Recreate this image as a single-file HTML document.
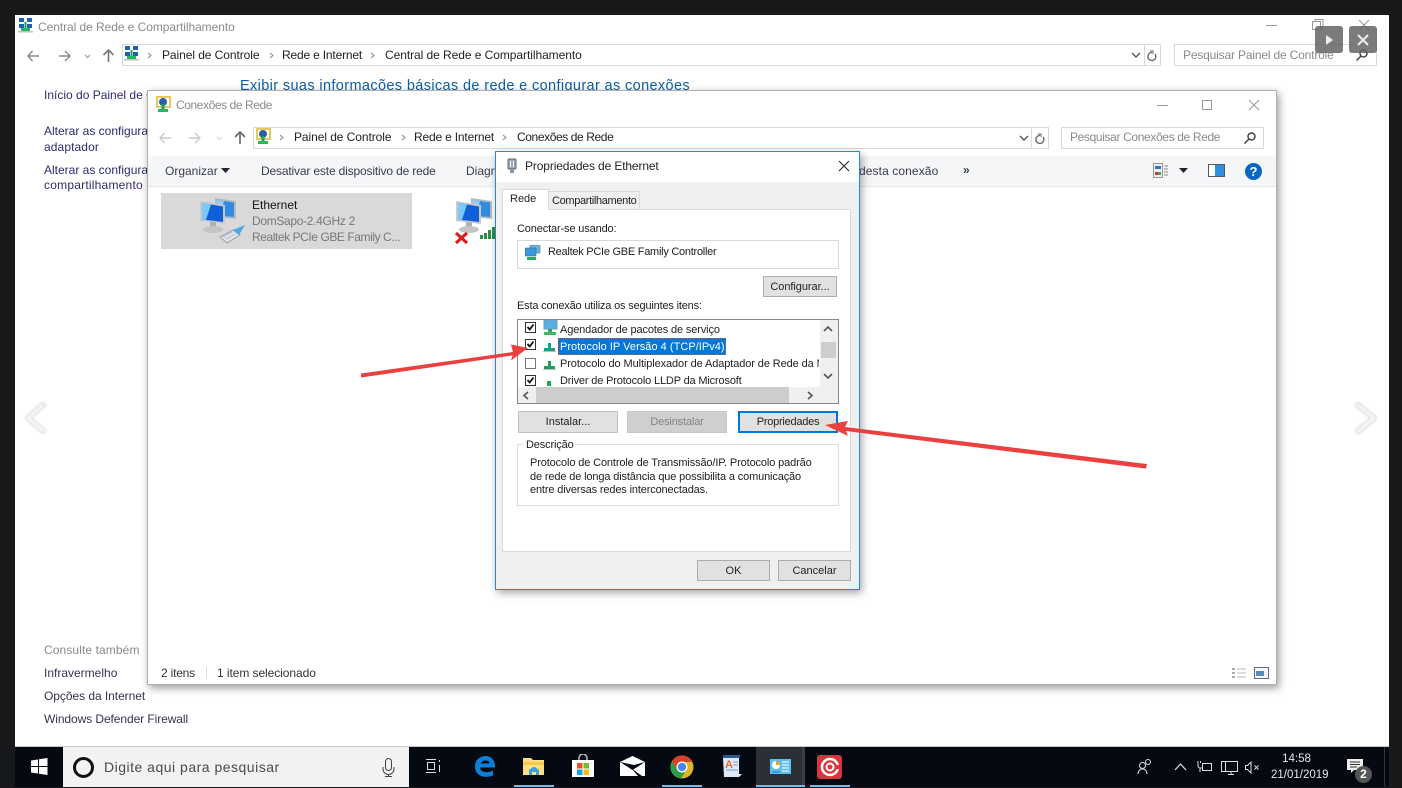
<!DOCTYPE html>
<html><head><meta charset="utf-8"><style>
*{box-sizing:border-box}
html,body{margin:0;padding:0;width:1402px;height:788px;overflow:hidden;background:#18191b}
body{position:relative;font-family:"Liberation Sans",sans-serif;font-size:12px;color:#222}
div,svg{position:absolute}
#w{left:0;top:0;width:1402px;height:788px;filter:blur(.35px)}
.t{white-space:nowrap;line-height:16px;height:16px}
.d{font-size:11px}
.l{color:#2b2b70}
.g{color:#8a8a8a}
.b{background:#e1e1e1;border:1px solid #adadad;text-align:center;line-height:20px;color:#222;font-size:11px}
.box{background:#fff;border:1px solid #d9d9d9}
</style></head><body>
<svg width="0" height="0" style="left:0;top:0">
<defs>
<g id="net"><rect x="1" y="0" width="5" height="4" fill="#2060b0"/><rect x="9" y="0" width="5" height="4" fill="#2060b0"/><rect x="1" y="6" width="5" height="4" fill="#2060b0"/><rect x="9" y="6" width="5" height="4" fill="#2060b0"/><rect x="6.5" y="4" width="2" height="9" fill="#20a050"/><rect x="3" y="10" width="9" height="3" fill="#20b860"/><rect x="0" y="13" width="15" height="1.5" fill="#c0c0c0"/></g>
<g id="conn"><rect x="1" y="0" width="15" height="12" fill="#e8c860"/><rect x="3" y="2" width="11" height="8" fill="#fff"/><circle cx="8" cy="6" r="4" fill="#2a5fa8"/><rect x="6.5" y="8" width="3" height="6" fill="#20a050"/><rect x="3" y="13" width="10" height="3" fill="#20b860"/></g>
<g id="mon"><path d="M16 1l21 3v18l-21-2z" fill="#b4bac2"/><path d="M18 3l17 2.500v14.500l-17-1.500z" fill="#2f8ce0"/><path d="M18 3l7 1-4 14.800-3-.3z" fill="#8ed0f8"/><path d="M1 4l25 4v19L1 24z" fill="#c6cad0"/><path d="M3 6l21 3.500V25L3 22.500z" fill="#0f5fd8"/><path d="M3 6l9 1.500-5 15.400-4-.4z" fill="#7cc8f8"/><path d="M11 25h6v6h-6z" fill="#b0b0b0"/><ellipse cx="14" cy="32.500" rx="10" ry="3.500" fill="#c4c4c4"/></g>
<g id="nodeg"><path d="M5 0h3v5H5z" fill="#20a060"/><path d="M1 5h11v3H1z" fill="#1fa060"/><path d="M0 8h13v1H0z" fill="#bbb"/></g>
</defs></svg>
<div id="w">

<!-- back window -->
<div style="left:15px;top:15px;width:1374px;height:732px;background:#fff"></div>
<svg style="left:18px;top:18px" width="16" height="16"><use href="#net"/></svg>
<div class="t g" style="left:38px;top:19px;letter-spacing:-.06px">Central de Rede e Compartilhamento</div>
<div style="left:1266px;top:25px;width:11px;height:1px;background:#999"></div>
<svg style="left:1312px;top:19px" width="12" height="12" fill="none" stroke="#999"><rect x=".5" y="2.5" width="8" height="8"/><path d="M3 2V.5h8v8H9"/></svg>
<svg style="left:1358px;top:19px" width="12" height="12" stroke="#999"><path d="M1 1l10 10M11 1L1 11"/></svg>
<svg style="left:27px;top:47px" width="100" height="16" fill="none" stroke="#888" stroke-width="1.4"><path d="M1 9h11M5.500 4L1 9l4.500 5"/><path d="M32 9h11M38 4l5 5-5 5" stroke="#888"/><path d="M58 8l2.500 2.500L63 8" stroke="#aaa"/><path d="M81.500 15V3M76.500 8l5-5 5 5" stroke="#777" stroke-width="1.600"/></svg>
<div style="left:122px;top:44px;width:1039px;height:22px;border:1px solid #d9d9d9"></div>
<svg style="left:124px;top:46px" width="16" height="16"><use href="#net"/></svg>
<div class="t" style="left:162px;top:47px;letter-spacing:-.07px">Painel de Controle</div>
<div class="t" style="left:282px;top:47px;letter-spacing:-.18px">Rede e Internet</div>
<div class="t" style="left:385px;top:47px;letter-spacing:-.06px">Central de Rede e Compartilhamento</div>
<svg style="left:146px;top:50px" width="240" height="10" fill="none" stroke="#888"><path d="M2 3l3 2.500L2 8M124 3l3 2.500L124 8M225 3l3 2.500L225 8"/></svg>
<svg style="left:1131px;top:50px" width="30" height="12" fill="none"><path d="M1 3l4 4 4-4" stroke="#555" stroke-width="1.400"/><path d="M19 1h3v3" stroke="#666"/><path d="M21 2.500a4 4 0 1 0 3 1.500" stroke="#666" stroke-width="1.300"/></svg>
<div style="left:1144px;top:44px;width:1px;height:22px;background:#d9d9d9"></div>
<div style="left:1174px;top:44px;width:203px;height:22px;border:1px solid #d9d9d9"></div>
<div class="t g" style="left:1183px;top:47px;letter-spacing:-.17px">Pesquisar Painel de Controle</div>
<svg style="left:1355px;top:48px" width="14" height="14" fill="none" stroke="#444" stroke-width="1.500"><circle cx="8.500" cy="5.500" r="3.500"/><path d="M6 8l-4.500 4.500"/></svg>
<div class="t" style="left:240px;top:78px;font-size:14.5px;color:#0c5fa8;letter-spacing:.37px;height:12px;overflow:hidden;line-height:17px">Exibir suas informações básicas de rede e configurar as conexões</div>
<div class="t l" style="left:44px;top:87px">Início do Painel de C</div>
<div class="t l" style="left:44px;top:123px">Alterar as configura</div>
<div class="t l" style="left:44px;top:139px;letter-spacing:.1px">adaptador</div>
<div class="t l" style="left:44px;top:162px">Alterar as configura</div>
<div class="t l" style="left:44px;top:177px;letter-spacing:.22px">compartilhamento</div>
<div class="t g" style="left:44px;top:642px;letter-spacing:.1px">Consulte também</div>
<div class="t" style="left:44px;top:665px;color:#333355">Infravermelho</div>
<div class="t" style="left:44px;top:688px;color:#333355;letter-spacing:-.05px">Opções da Internet</div>
<div class="t" style="left:44px;top:711px;color:#333355;letter-spacing:-.08px">Windows Defender Firewall</div>

<!-- conexoes -->
<div style="left:147px;top:90px;width:1130px;height:595px;background:#fff;border:1px solid #b0b0b0;box-shadow:2px 3px 8px rgba(0,0,0,.4)"></div>
<svg style="left:155px;top:96px" width="17" height="17"><use href="#conn"/></svg>
<div class="t g" style="left:176px;top:97px;letter-spacing:-.42px">Conexões de Rede</div>
<div style="left:1157px;top:105px;width:11px;height:1px;background:#999"></div>
<div style="left:1202px;top:100px;width:10px;height:10px;border:1px solid #999"></div>
<svg style="left:1248px;top:99px" width="12" height="12" stroke="#999"><path d="M1 1l10 10M11 1L1 11"/></svg>
<svg style="left:159px;top:129px" width="100" height="16" fill="none" stroke="#ccc" stroke-width="1.400"><path d="M1 9h11M5.500 4L1 9l4.500 5"/><path d="M30 9h11M36 4l5 5-5 5"/><path d="M58 8l2.500 2.500L63 8" stroke="#ddd"/><path d="M81 15V3M76 8l5-5 5 5" stroke="#666" stroke-width="1.600"/></svg>
<div style="left:253px;top:127px;width:796px;height:22px;border:1px solid #d9d9d9"></div>
<svg style="left:255px;top:128px" width="17" height="17"><use href="#conn"/></svg>
<svg style="left:278px;top:132px" width="240" height="10" fill="none" stroke="#888"><path d="M2 3l3 2.500L2 8M124 3l3 2.500L124 8M225 3l3 2.500L225 8"/></svg>
<div class="t" style="left:294px;top:129px;letter-spacing:-.07px">Painel de Controle</div>
<div class="t" style="left:414px;top:129px;letter-spacing:-.18px">Rede e Internet</div>
<div class="t" style="left:517px;top:129px;letter-spacing:-.4px">Conexões de Rede</div>
<svg style="left:1019px;top:132px" width="30" height="14" fill="none"><path d="M1 4l4 4 4-4" stroke="#555" stroke-width="1.400"/><path d="M19 2h3v3" stroke="#666"/><path d="M21 3.500a4 4 0 1 0 3 1.500" stroke="#666" stroke-width="1.300"/></svg>
<div style="left:1031px;top:127px;width:1px;height:22px;background:#d9d9d9"></div>
<div style="left:1061px;top:127px;width:203px;height:22px;border:1px solid #d9d9d9"></div>
<div class="t g" style="left:1070px;top:129px;letter-spacing:-.36px">Pesquisar Conexões de Rede</div>
<svg style="left:1243px;top:131px" width="14" height="14" fill="none" stroke="#444" stroke-width="1.500"><circle cx="8.500" cy="5.500" r="3.500"/><path d="M6 8l-4.500 4.500"/></svg>
<div style="left:148px;top:156px;width:1128px;height:31px;background:#f5f6f7;border-bottom:1px solid #e8e8e8"></div>
<div class="t" style="left:165px;top:163px;color:#3a3a50">Organizar</div>
<svg style="left:221px;top:168px" width="9" height="6"><path d="M0 0h9L4.500 5z" fill="#223"/></svg>
<div class="t" style="left:261px;top:163px;color:#3a3a50;letter-spacing:-.16px">Desativar este dispositivo de rede</div>
<div class="t" style="left:466px;top:163px;color:#3a3a50">Diagn</div>
<div class="t" style="left:859px;top:163px;color:#3a3a50;letter-spacing:.1px">desta conexão</div>
<div class="t" style="left:963px;top:162px;color:#3a3a50;font-weight:bold">»</div>
<svg style="left:1153px;top:163px" width="16" height="16"><rect x=".5" y=".5" width="9" height="14" fill="#eee" stroke="#999"/><rect x="2" y="3" width="6" height="3" fill="#3a70c0"/><rect x="2" y="9" width="3" height="3" fill="#c04040"/><rect x="5" y="9" width="3" height="3" fill="#50a050"/><path d="M11 3h4M11 6h4M11 9h4M11 12h4" stroke="#888"/></svg>
<svg style="left:1179px;top:168px" width="9" height="6"><path d="M0 0h9L4.500 5z" fill="#223"/></svg>
<svg style="left:1208px;top:164px" width="17" height="13"><rect x=".5" y=".5" width="16" height="12" fill="#fff" stroke="#556"/><rect x="7" y="1" width="9" height="11" fill="#2f8fe0"/></svg>
<div style="left:1245px;top:163px;width:17px;height:17px;border-radius:50%;background:#0a66c0;color:#fff;font-weight:bold;font-size:13px;line-height:17px;text-align:center">?</div>

<div style="left:161px;top:193px;width:251px;height:56px;background:#d9d9d9"></div>
<svg style="left:199px;top:197px" width="40" height="42"><use href="#mon"/></svg>
<svg style="left:219px;top:224px" width="28" height="20"><path d="M1 13l13-7 7 5-13 8z" fill="#dfe4e8" stroke="#8a949c" stroke-width=".8"/><path d="M4 13l9-5M7 15l9-5" stroke="#9aa4ac" stroke-width=".7"/><path d="M14 6l12-5-6 10z" fill="#4aa8e8"/></svg>
<div class="t" style="left:252px;top:197px;color:#111">Ethernet</div>
<div class="t" style="left:252px;top:213px;color:#777;letter-spacing:-.32px">DomSapo-2.4GHz 2</div>
<div class="t" style="left:252px;top:229px;color:#777;letter-spacing:-.43px">Realtek PCIe GBE Family C...</div>
<svg style="left:455px;top:197px" width="40" height="42"><use href="#mon"/></svg>
<svg style="left:454px;top:231px" width="15" height="14"><path d="M2 2l11 10M13 2L2 12" stroke="#d81e1e" stroke-width="3.200"/></svg>
<svg style="left:479px;top:226px" width="17" height="14" fill="#2f8f40"><rect x="1" y="9" width="3" height="4"/><rect x="5" y="7" width="3" height="6"/><rect x="9" y="4" width="3" height="9"/><rect x="13" y="1" width="3" height="12"/></svg>
<div class="t" style="left:161px;top:665px;color:#333;letter-spacing:-.2px">2 itens</div>
<div style="left:206px;top:667px;width:1px;height:12px;background:#ddd"></div>
<div class="t" style="left:217px;top:665px;color:#333;letter-spacing:-.07px">1 item selecionado</div>
<svg style="left:1231px;top:666px" width="38" height="14"><path d="M1 2h3v2H1zM1 6h3v2H1zM1 10h3v2H1z" fill="#aab"/><path d="M6 3h9M6 7h9M6 11h9" stroke="#bbb"/><rect x="23.500" y="1.500" width="14" height="11" fill="#f4f8fc" stroke="#668"/><rect x="25" y="5" width="8" height="5" fill="#5a8ab8"/></svg>

<!-- dialog -->
<div style="left:495px;top:151px;width:365px;height:439px;background:#f0f0f0;border:1px solid #2c88cf;box-shadow:2px 3px 8px rgba(0,0,0,.35)"></div>
<div style="left:496px;top:152px;width:363px;height:30px;background:#fff"></div>
<svg style="left:506px;top:158px" width="12" height="17"><rect x="2" y="1" width="8" height="10" rx="1" fill="#9ab" stroke="#567"/><rect x="4" y="3" width="1" height="6" fill="#fff"/><rect x="7" y="3" width="1" height="6" fill="#fff"/><rect x="4" y="11" width="4" height="4" fill="#8b9ba8"/></svg>
<div class="t" style="left:525px;top:158px;letter-spacing:-.13px">Propriedades de Ethernet</div>
<svg style="left:838px;top:160px" width="12" height="12" stroke="#222"><path d="M1 1l10 10M11 1L1 11"/></svg>
<div style="left:502px;top:209px;width:349px;height:343px;background:#fff;border:1px solid #d9d9d9"></div>
<div style="left:548px;top:191px;width:92px;height:19px;background:#f0f0f0;border:1px solid #d9d9d9"></div>
<div style="left:502px;top:189px;width:47px;height:21px;background:#fff;border:1px solid #d9d9d9;border-bottom:0"></div>
<div class="t d" style="left:510px;top:191px">Rede</div>
<div class="t d" style="left:552px;top:193px;letter-spacing:-.34px">Compartilhamento</div>
<div class="t d" style="left:517px;top:221px;letter-spacing:-.14px">Conectar-se usando:</div>
<div class="box" style="left:517px;top:240px;width:322px;height:29px"></div>
<svg style="left:525px;top:245px" width="16" height="16"><rect x="5" y="0" width="10" height="8" fill="#6fb0e0" stroke="#4a7ca0" stroke-width=".6"/><rect x="0" y="3" width="11" height="8" fill="#3b98e0" stroke="#36708f" stroke-width=".6"/><rect x="2" y="12" width="9" height="3" fill="#25b060"/></svg>
<div class="t d" style="left:548px;top:244px;letter-spacing:-.26px">Realtek PCIe GBE Family Controller</div>
<div class="b" style="left:763px;top:276px;width:74px;height:21px;letter-spacing:-.05px">Configurar...</div>
<div class="t d" style="left:517px;top:298px;letter-spacing:-.18px">Esta conexão utiliza os seguintes itens:</div>
<div style="left:517px;top:319px;width:322px;height:85px;background:#fff;border:1px solid #828790"></div>
<svg style="left:525px;top:322px" width="13" height="65"><g fill="#fff" stroke="#333"><rect x=".5" y=".5" width="10" height="10"/><rect x=".5" y="17.500" width="10" height="10"/><rect x=".5" y="36.500" width="10" height="10" stroke="#777"/><rect x=".5" y="53.500" width="10" height="10"/></g><g fill="none" stroke="#111" stroke-width="1.800"><path d="M2.500 5l2.200 2.500 3.800-5M2.500 22l2.200 2.500 3.800-5M2.500 58l2.200 2.500 3.800-5"/></g></svg>
<svg style="left:542px;top:320px" width="16" height="16"><rect x="2" y="0" width="13" height="9" fill="#5aaee8" stroke="#7a97a8"/><rect x="6" y="9" width="4" height="4" fill="#30a860"/><rect x="2" y="12" width="12" height="3" fill="#40b860"/></svg>
<svg style="left:543px;top:343px" width="14" height="10"><use href="#nodeg" style="filter:hue-rotate(20deg)"/></svg>
<svg style="left:543px;top:361px" width="14" height="10"><use href="#nodeg"/></svg>
<svg style="left:546px;top:381px" width="8" height="5"><rect x="1" y="0" width="4" height="5" fill="#20a850"/></svg>
<div class="t d" style="left:560px;top:322px;letter-spacing:-.13px">Agendador de pacotes de serviço</div>
<div style="left:558px;top:338px;width:168px;height:17px;background:#0078d7;outline:1px dotted #c06030;outline-offset:-1px"></div>
<div class="t d" style="left:560px;top:339px;color:#fff;letter-spacing:.03px">Protocolo IP Versão 4 (TCP/IPv4)</div>
<div style="left:560px;top:356px;width:259px;height:16px;overflow:hidden"><div class="t d" style="left:0;top:0;letter-spacing:-.1px">Protocolo do Multiplexador de Adaptador de Rede da Microsoft</div></div>
<div style="left:560px;top:372px;width:259px;height:15px;overflow:hidden"><div class="t d" style="left:0;top:1px;letter-spacing:-.16px">Driver de Protocolo LLDP da Microsoft</div></div>
<div style="left:820px;top:320px;width:18px;height:67px;background:#f0f0f0"></div>
<div style="left:821px;top:342px;width:15px;height:16px;background:#cdcdcd"></div>
<svg style="left:823px;top:325px" width="10" height="56" fill="none" stroke="#555" stroke-width="1.600"><path d="M1 6l4-4 4 4M1 49l4 4 4-4"/></svg>
<div style="left:518px;top:387px;width:320px;height:16px;background:#f0f0f0"></div>
<div style="left:536px;top:387px;width:253px;height:16px;background:#cdcdcd"></div>
<svg style="left:523px;top:391px" width="296" height="9" fill="none" stroke="#555" stroke-width="1.600"><path d="M5 1L1 4.500 5 8M285 1l4 3.500L285 8"/></svg>
<div class="b" style="left:518px;top:411px;width:100px;height:22px;border-color:#c0c0c0">Instalar...</div>
<div class="b" style="left:627px;top:411px;width:100px;height:22px;background:#cfcfcf;border-color:#c8c8c8;color:#838383;letter-spacing:-.15px">Desinstalar</div>
<div class="b" style="left:738px;top:411px;width:100px;height:22px;border:2px solid #0078d7;line-height:18px;letter-spacing:-.25px">Propriedades</div>
<div style="left:517px;top:444px;width:322px;height:62px;border:1px solid #dcdcdc"></div>
<div class="t d" style="left:523px;top:437px;padding:0 3px;background:#fff;letter-spacing:-.15px">Descrição</div>
<div class="t d" style="left:530px;top:455px;letter-spacing:-.13px">Protocolo de Controle de Transmissão/IP. Protocolo padrão</div>
<div class="t d" style="left:530px;top:469px;letter-spacing:-.14px">de rede de longa distância que possibilita a comunicação</div>
<div class="t d" style="left:530px;top:482px;letter-spacing:-.15px">entre diversas redes interconectadas.</div>
<div class="b" style="left:697px;top:560px;width:73px;height:21px">OK</div>
<div class="b" style="left:778px;top:560px;width:73px;height:21px">Cancelar</div>

<!-- arrows -->
<svg style="left:0;top:0" width="1402" height="788" fill="#ea4040"><path d="M361 373.500L513 352l-2-7.500 17 3.500-17 12.500 1.500-5L361 377.500z"/><path d="M1147 464L845 427l3-6-23 4 23 11-2-5 300 37.500z"/></svg>

<!-- gallery chevrons -->
<svg style="left:20px;top:398px;overflow:visible" width="30" height="40" fill="none" stroke-linecap="round" stroke-linejoin="round"><g style="filter:blur(1px)"><path d="M23 7L8 20l15 13" stroke="#dcdcdc" stroke-width="6"/><path d="M23 7L8 20l15 13" stroke="#fff" stroke-width="2.500"/></g></svg>
<svg style="left:1350px;top:398px;overflow:visible" width="30" height="40" fill="none" stroke-linecap="round" stroke-linejoin="round"><g style="filter:blur(1px)"><path d="M8 7l16 13L8 33" stroke="#dcdcdc" stroke-width="6"/><path d="M8 7l16 13L8 33" stroke="#fff" stroke-width="2.500"/></g></svg>
<div style="left:1315px;top:26px;width:28px;height:27px;background:rgba(100,100,100,.85);border-radius:3px"></div>
<svg style="left:1325px;top:35px" width="9" height="10"><path d="M1 0l7 5-7 5z" fill="#eee"/></svg>
<div style="left:1349px;top:26px;width:28px;height:27px;background:rgba(100,100,100,.85);border-radius:3px"></div>
<svg style="left:1357px;top:34px" width="12" height="12" stroke="#eee" stroke-width="2"><path d="M1 1l10 10M11 1L1 11"/></svg>

<!-- taskbar -->
<div style="left:15px;top:747px;width:1374px;height:40px;background:#050a12"></div>
<div style="left:15px;top:746px;width:1374px;height:1px;background:#c8c8c8"></div>
<svg style="left:31px;top:758px" width="17" height="17" fill="#fff"><path d="M0 2.500L7 1.500V8H0zM8 1.300L16.500 0v8H8zM0 9h7v6.500L0 14.500zM8 9h8.500v8L8 15.700z"/></svg>
<div style="left:63px;top:747px;width:346px;height:40px;background:#f2f2f2"></div>
<div style="left:73px;top:757px;width:21px;height:21px;border:3px solid #111;border-radius:50%"></div>
<div class="t" style="left:104px;top:759px;font-size:14px;color:#4a4a4a;letter-spacing:.5px">Digite aqui para pesquisar</div>
<svg style="left:382px;top:758px" width="14" height="20" fill="none" stroke="#444"><rect x="3.500" y=".5" width="6" height="12" rx="3"/><path d="M1 9v2a5.500 5.500 0 0 0 11 0V9M6.500 16v2M3 18.500h7"/></svg>
<svg style="left:425px;top:758px" width="17" height="17" fill="none" stroke="#ddd"><path d="M1 1.500h10M1 14.500h10M2.500 4.500h7v7h-7zM14.500 2v2M14.500 7v7"/></svg>
<svg style="left:474px;top:755px" width="22" height="22"><path d="M21 12.500H6c.3 5 7 6 13 3v5c-8 3-18 1-18-9C1 4 7 1 11.500 1 17 1 21.500 5 21 12.500zM15.500 8.500c0-4-7.500-4-8.500 0z" fill="#0a7fd8" fill-rule="evenodd"/></svg>
<svg style="left:523px;top:757px" width="22" height="19"><path d="M0 1h8l2 2h11v15H0z" fill="#ffdf80"/><rect x="0" y="5" width="21" height="3" fill="#f4c848"/><path d="M6 18v-5l4-3h2l4 3v5h-3v-3H9v3z" fill="#3aa4e0"/></svg>
<div style="left:514px;top:785px;width:40px;height:2px;background:#76b9ed"></div>
<svg style="left:571px;top:754px" width="24" height="24"><path d="M8 7V4a4 4 0 0 1 8 0v3" fill="none" stroke="#bbb" stroke-width="1.500"/><path d="M1 6h22v17H1z" fill="#fff"/><rect x="6" y="9" width="5.500" height="5.500" fill="#e8502c"/><rect x="12.500" y="9" width="5.500" height="5.500" fill="#7cb82c"/><rect x="6" y="15.500" width="5.500" height="5.500" fill="#18a4ec"/><rect x="12.500" y="15.500" width="5.500" height="5.500" fill="#fcb814"/></svg>
<svg style="left:620px;top:756px" width="25" height="20"><path d="M0 6L12.500 0 25 6v14H0z" fill="#fff"/><path d="M0 6l12.500 8L25 6 14 9z" fill="#050a12"/><path d="M11 12l11 8h-4z" fill="#050a12"/></svg>
<svg style="left:670px;top:755px" width="24" height="24"><circle cx="12" cy="12" r="11.500" fill="#e0b428"/><path d="M12 .5A11.500 11.500 0 0 0 2 6.200L7.500 15 12 7h10A11.500 11.500 0 0 0 12 .5z" fill="#d8402f"/><path d="M2 6.200A11.500 11.500 0 0 0 11 23.500l5-8.200-8.500-.3z" fill="#2f9a48"/><circle cx="12" cy="12" r="5.500" fill="#fff"/><circle cx="12" cy="12" r="4.200" fill="#4a88e8"/></svg>
<div style="left:662px;top:785px;width:40px;height:2px;background:#76b9ed"></div>
<svg style="left:722px;top:755px" width="20" height="23"><rect x="1" y="0" width="17" height="3" fill="#2a5a8a"/><path d="M1 3h16v16h3l-3 3H2z" fill="#dfeaf6"/><text x="3" y="13" font-family="Liberation Sans" font-size="11" font-weight="bold" fill="#e07030">A</text><path d="M11 7h5M11 10h5M4 15h12" stroke="#7aa0c8"/></svg>
<div style="left:756px;top:747px;width:49px;height:40px;background:#2b2f36"></div>
<div style="left:802px;top:747px;width:3px;height:40px;background:#3a3e45"></div>
<div style="left:756px;top:785px;width:49px;height:2px;background:#76b9ed"></div>
<svg style="left:770px;top:759px" width="21" height="15"><rect width="21" height="15" fill="#5fc0ee"/><circle cx="6" cy="6" r="4" fill="#fff"/><path d="M6 6V2a4 4 0 0 1 4 4z" fill="#f0a020"/><path d="M12 3h7M12 6h7M12 9h7M12 12h7" stroke="#fff"/><path d="M2 13h8" stroke="#1a70b0"/></svg>
<svg style="left:817px;top:755px" width="25" height="24"><rect width="25" height="24" rx="3" fill="#d8363c"/><circle cx="13" cy="12" r="8" fill="none" stroke="#fff" stroke-width="2.500"/><circle cx="13" cy="12" r="3.500" fill="none" stroke="#fff" stroke-width="2"/><rect x="19" y="10" width="6" height="4" fill="#d8363c"/></svg>
<div style="left:810px;top:785px;width:40px;height:2px;background:#76b9ed"></div>
<svg style="left:1137px;top:758px" width="16" height="17" fill="none" stroke="#ddd"><circle cx="5.500" cy="7.500" r="3"/><path d="M1 16c0-3 2-5 4.500-5S10 13 10 16"/><circle cx="11" cy="4" r="2.500"/></svg>
<svg style="left:1174px;top:763px" width="13" height="8" fill="none" stroke="#ddd" stroke-width="1.200"><path d="M1 7l5.500-6L12 7"/></svg>
<svg style="left:1197px;top:760px" width="16" height="14" fill="none" stroke="#ddd"><rect x="5.500" y="3.500" width="9" height="7"/><path d="M1 3v3a2 2 0 0 0 2 2h2M3 8v4M1 1v2M3.500 1v2"/></svg>
<svg style="left:1221px;top:760px" width="18" height="16" fill="none" stroke="#ddd"><path d="M4.500 1.500h12v10h-12M10 11.500v3M7 14.500h6"/><rect x=".5" y="1.500" width="4" height="10" fill="#050a12"/></svg>
<svg style="left:1245px;top:761px" width="16" height="13" fill="none" stroke="#ddd"><path d="M6 1v11L2.500 8.500H.5v-4h2zM9.500 4.500l4 4M13.500 4.500l-4 4"/></svg>
<div class="t" style="left:1272px;top:751px;width:49px;text-align:center;color:#e6e6e6;font-size:11.5px">14:58</div>
<div class="t" style="left:1271px;top:767px;color:#e6e6e6;font-size:11.5px">21/01/2019</div>
<svg style="left:1347px;top:759px" width="16" height="16"><path d="M0 0h16v11h-9l-3 3v-3H0z" fill="#eee"/><path d="M3 3h10M3 5.500h10M3 8h7" stroke="#333"/></svg>
<div style="left:1355px;top:766px;width:17px;height:17px;border-radius:50%;background:#555;color:#fff;font-weight:bold;font-size:12px;line-height:17px;text-align:center">2</div>
<div style="left:1384px;top:747px;width:1px;height:40px;background:#333"></div>
</div>
</body></html>
